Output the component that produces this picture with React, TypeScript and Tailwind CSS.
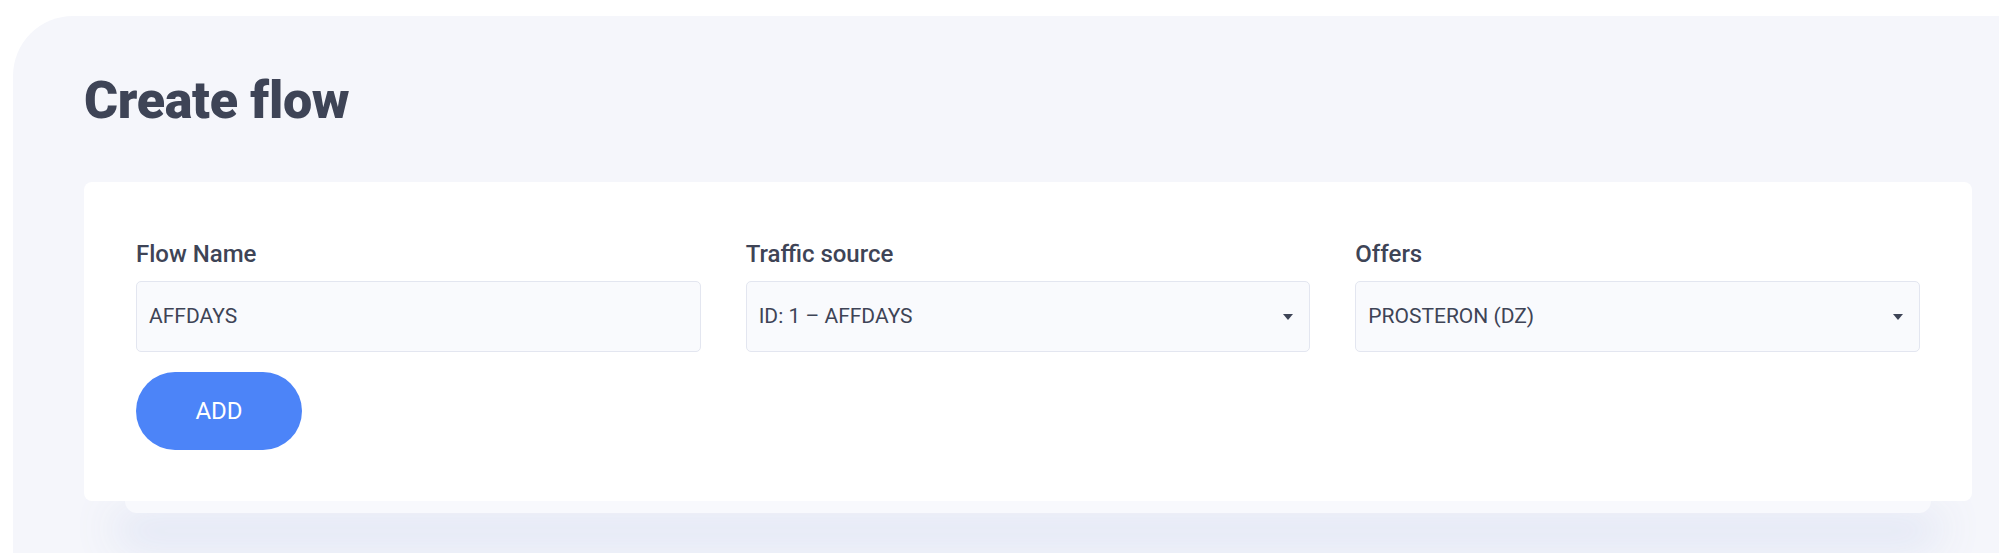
import React from 'react';

const textColor = 'text-[#3e4456]';

const Caret = () => (
  <svg width="10" height="6" viewBox="0 0 10 6" className="shrink-0">
    <path d="M0 0 L10 0 L5 6 Z" fill="#3e4456" />
  </svg>
);

const Field: React.FC<{ label: string; value: string; select?: boolean }> = ({ label, value, select }) => (
  <div className="flex flex-col">
    <label className={`text-[24px] leading-[28px] font-medium ${textColor} mb-[13px]`}>{label}</label>
    <div className="h-[71px] flex items-center justify-between border border-[#e3e6f0] bg-[#f9fafd] rounded-[5px] pl-[12px] pr-[16px]">
      <span className={`text-[21px] ${textColor}`}>{value}</span>
      {select && <Caret />}
    </div>
  </div>
);

export default function App() {
  return (
    <div className="min-h-[555px] bg-white pt-4 pl-[13px]" style={{ fontFamily: 'Roboto, "Noto Sans", sans-serif' }}>
      <div className="h-[537px] bg-[#f5f6fb] rounded-tl-[60px] pl-[71px] pr-[27px] pt-[59px] overflow-hidden">
        <h1 className={`text-[52px] leading-none font-black tracking-[-0.3px] ${textColor} mb-[55px]`}>Create flow</h1>

        {/* Card */}
        <div className="relative z-10 bg-white rounded-[8px] pt-[58px] pb-[51px] px-[52px]">
          <div className="grid grid-cols-3 gap-[45px]">
            <Field label="Flow Name" value="AFFDAYS" />
            <Field label="Traffic source" value="ID: 1 – AFFDAYS" select />
            <Field label="Offers" value="PROSTERON (DZ)" select />
          </div>
          <button className="mt-[20px] w-[166px] h-[78px] rounded-full bg-[#4c84f8] text-white text-[24px]">
            ADD
          </button>
        </div>

        {/* stacked card behind */}
        <div className="mx-[41px] h-[12px] rounded-b-[12px] bg-[#f8f9fd] shadow-[0_24px_40px_10px_rgba(221,226,243,0.9)]" />
      </div>
    </div>
  );
}
